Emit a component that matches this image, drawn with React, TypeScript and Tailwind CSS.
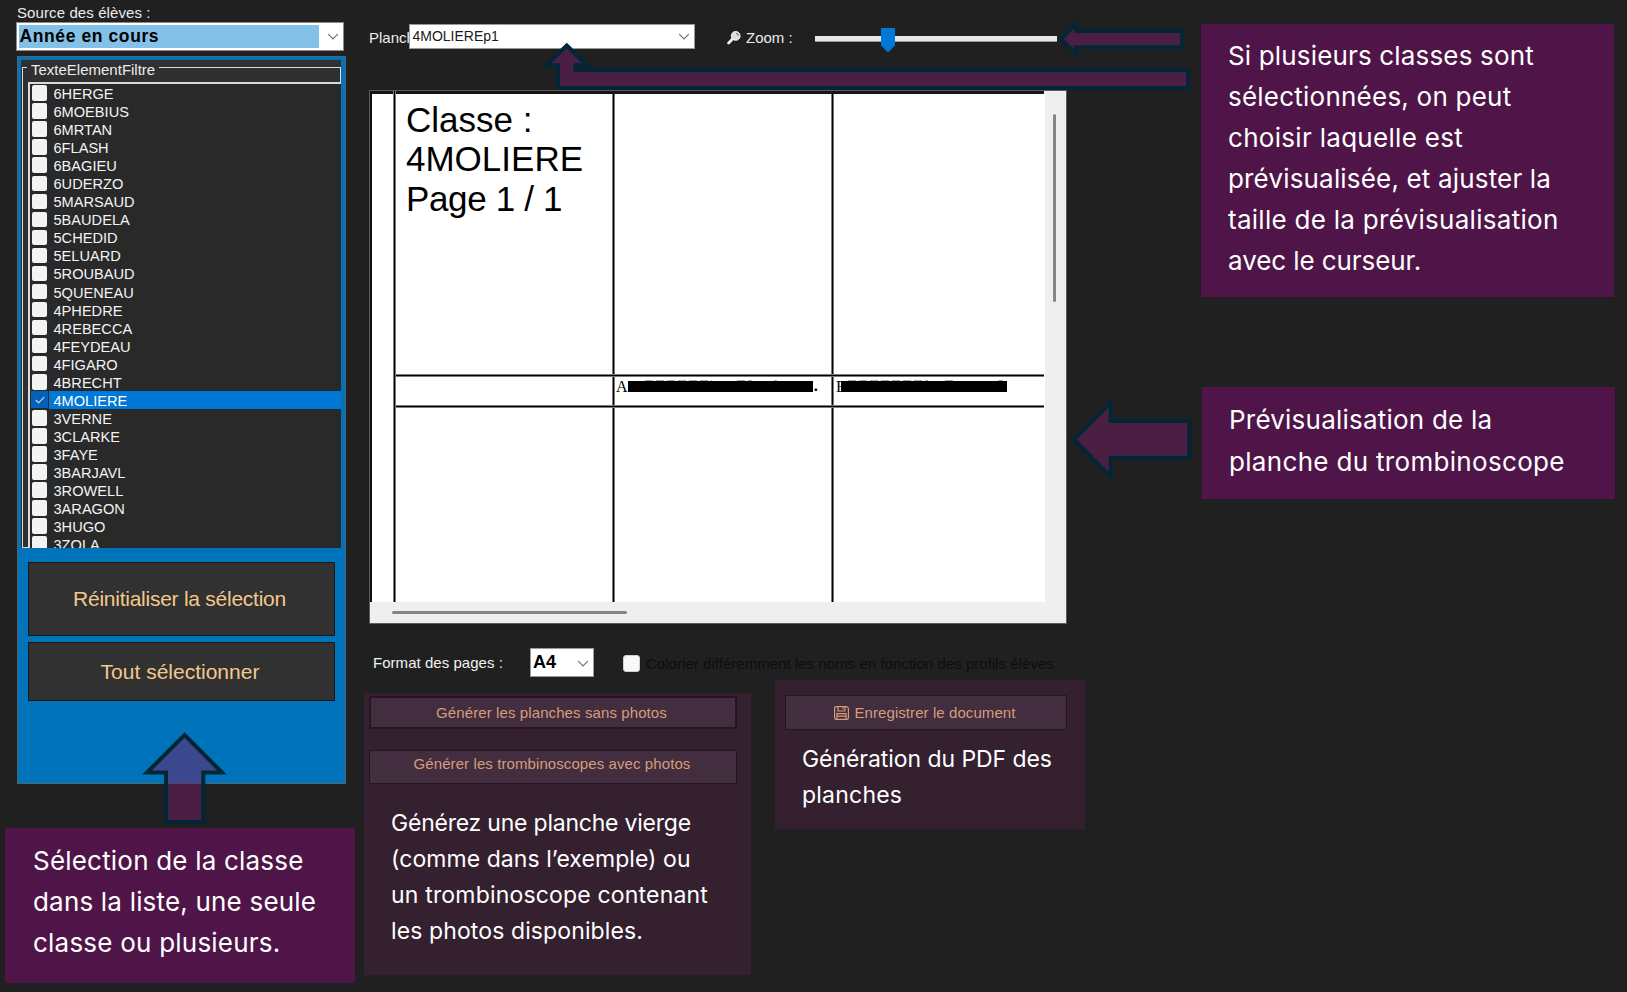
import type { ReactNode } from "react";

const classes = [
  "6HERGE", "6MOEBIUS", "6MRTAN", "6FLASH", "6BAGIEU", "6UDERZO", "5MARSAUD",
  "5BAUDELA", "5CHEDID", "5ELUARD", "5ROUBAUD", "5QUENEAU", "4PHEDRE",
  "4REBECCA", "4FEYDEAU", "4FIGARO", "4BRECHT", "4MOLIERE", "3VERNE",
  "3CLARKE", "3FAYE", "3BARJAVL", "3ROWELL", "3ARAGON", "3HUGO", "3ZOLA",
];

function Chevron({ className = "" }: { className?: string }) {
  return (
    <svg width="12" height="8" viewBox="0 0 12 8" fill="none" className={className}>
      <path d="M1.2 1.2 L6 6 L10.8 1.2" stroke="#707070" strokeWidth="1.2" />
    </svg>
  );
}

function ClassRow({ name, selected }: { name: string; selected: boolean }) {
  return (
    <li className="flex h-[18.06px] items-center pl-[1px]">
      {selected ? (
        <span className="flex h-[17px] w-[17px] shrink-0 items-center justify-center bg-[#0560b8]">
          <svg width="10" height="8" viewBox="0 0 10 8" fill="none">
            <path d="M0.8 4 L3.6 6.8 L9.2 1.2" stroke="#d9e8f6" strokeWidth="1.1" />
          </svg>
        </span>
      ) : (
        <span className="mr-px ml-[0.5px] h-[15.5px] w-[15.5px] shrink-0 rounded-[2px] bg-[#f3f3f3]" />
      )}
      <span
        className={
          selected
            ? "ml-px h-full flex-1 bg-[#0078d7] pl-[4.5px] text-[14.6px] leading-[20px] text-white"
            : "ml-px h-full flex-1 pl-[4.5px] text-[14.6px] leading-[20px] text-[#f4f4f4]"
        }
      >
        {name}
      </span>
    </li>
  );
}

function Sidebar() {
  return (
    <aside className="flex w-[360px] shrink-0 flex-col">
      <div className="ml-[17px] h-[22px] pt-[3px] text-[15px] leading-[20px] tracking-[0.1px] text-[#ececec]">Source des élèves :</div>
      <div className="ml-[16px] flex h-[29px] w-[328px] items-center border border-[#8a8a8a] bg-white pl-[2px]">
        <div className="h-[23px] w-[300px] bg-[#83c1e8] pl-[0.5px] text-[17.5px] leading-[23px] font-bold tracking-[0.6px] text-black">
          Année en cours
        </div>
        <Chevron className="ml-[8px]" />
      </div>
      <section className="mt-[5px] ml-[17px] h-[728px] w-[329px] border border-[#4f6473] bg-[#0173bb] pt-[3px] pl-[3px]">
        <div className="h-[488px] w-[320px] overflow-hidden bg-[#303030] pt-[7px]">
          <div className="relative ml-px h-[481px] border border-[#dcdcdc]">
            <span className="absolute -top-[8px] left-[4px] bg-[#303030] px-[4px] text-[15px] leading-[20px] text-[#ececec]">
              TexteElementFiltre
            </span>
            <ul className="mt-[14px] -mr-px ml-[5px] h-[466px] overflow-hidden border-t-2 border-l-2 border-[#dcdcdc] bg-[#292929]">
              {classes.map((name) => (
                <ClassRow key={name} name={name} selected={name === "4MOLIERE"} />
              ))}
            </ul>
          </div>
        </div>
        <button className="mt-[14px] ml-[7px] flex h-[74px] w-[307px] items-center justify-center border border-[#181818] bg-[#313131] pr-[4px] text-[21px] tracking-[-0.25px] text-[#f3c98b]">
          Réinitialiser la sélection
        </button>
        <button className="mt-[6px] ml-[7px] flex h-[59px] w-[307px] items-center justify-center border border-[#181818] bg-[#313131] pr-[3px] text-[21px] text-[#f3c98b]">
          Tout sélectionner
        </button>
      </section>
      <div className="mt-[44px] ml-[5px] h-[155px] w-[350px] bg-[#4f1548] pt-[12px] pl-[28px] font-[Inter,sans-serif] text-[26px] leading-[41px] whitespace-nowrap text-white">
        <p className="tracking-[0.2px]">Sélection de la classe</p>
        <p className="tracking-[0.19px]">dans la liste, une seule</p>
        <p className="tracking-[0.22px]">classe ou plusieurs.</p>
      </div>
    </aside>
  );
}

function VLine() {
  return <span className="w-[3px] shrink-0 self-stretch border-x border-[#7c7c7c] bg-black" />;
}

function HLine() {
  return <div className="h-[3px] shrink-0 border-y border-[#7c7c7c] bg-black" />;
}

function SheetRow({ className, cells }: { className: string; cells: ReactNode[] }) {
  return (
    <div className={className}>
      <div className="w-[216px] shrink-0">{cells[0]}</div>
      <VLine />
      <div className="w-[216px] shrink-0">{cells[1]}</div>
      <VLine />
      <div className="flex-1">{cells[2]}</div>
    </div>
  );
}

function Preview() {
  return (
    <div className="ml-[9px] flex h-[534px] w-[698px] flex-col border border-[#5c5c5c] bg-[#efefef]">
      <div className="flex h-[511px]">
        <div className="flex w-[675px] border-l-2 border-[#101010] bg-white pr-px">
          <div className="w-[21px] border-t-[3px] border-[#161417]" />
          <VLine />
          <div className="flex flex-1 flex-col border-t-[3px] border-[#161417]">
            <SheetRow
              className="flex h-[280px]"
              cells={[
                <div key="t" className="pt-[6px] pl-[10px] text-[35px] leading-[39px] whitespace-nowrap text-black">
                  <p>Classe :</p>
                  <p>4MOLIERE</p>
                  <p className="pt-px tracking-[-0.35px]">Page 1 / 1</p>
                </div>,
                null,
                null,
              ]}
            />
            <HLine />
            <SheetRow
              className="flex h-[28px]"
              cells={[
                null,
                <div key="a" className="flex pl-px font-['Liberation_Mono',monospace] text-[16px] leading-[20px] text-black">
                  <span className="w-[12px] font-['Liberation_Serif',serif]">A</span>
                  <span className="mt-[4px] h-[11px] w-[185px] bg-black" />
                  <span className="-ml-[2px] font-bold">.</span>
                </div>,
                <div key="b" className="flex pl-[2px] font-['Liberation_Serif',serif] text-[16px] leading-[20px] text-black">
                  <span className="w-[5px]">E</span>
                  <span className="mt-[4px] h-[11px] w-[166px] bg-black" />
                </div>,
              ]}
            />
            <HLine />
            <SheetRow className="flex flex-1" cells={[null, null, null]} />
          </div>
        </div>
        <div className="flex-1 pt-[23px] pl-[8px]">
          <div className="h-[188px] w-[3px] rounded-full bg-[#858585]" />
        </div>
      </div>
      <div className="pt-[9px] pl-[22px]">
        <div className="h-[3px] w-[235px] rounded-full bg-[#858585]" />
      </div>
    </div>
  );
}

function Toolbar() {
  return (
    <div className="flex h-[90px] pl-[9px] text-[15px] text-[#ececec]">
      <div className="mt-[28px] h-[20px] w-[40px] leading-[20px] whitespace-nowrap">Planch</div>
      <div className="z-10 mt-[24px] flex h-[25px] w-[286px] justify-between border border-[#9a9a9a] bg-white pr-[4px] pl-[2.5px]">
        <span className="text-[14px] leading-[22px] text-[#1a1a1a]">4MOLIEREp1</span>
        <Chevron className="mt-[8px]" />
      </div>
      <svg width="14" height="14" viewBox="0 0 14 14" className="mt-[31px] ml-[32px]">
        <path d="M1.6 12 L5.6 8" stroke="#f0f0f0" strokeWidth="2.8" strokeLinecap="round" />
        <circle cx="8.7" cy="4.9" r="4.4" fill="#dedede" stroke="#f4f4f4" strokeWidth="1" />
        <path d="M9 2.4 a2.6 2.6 0 0 1 2.4 2.6" stroke="#8a7f74" strokeWidth="1.2" fill="none" />
      </svg>
      <div className="mt-[28px] ml-[5px] w-[69px] leading-[20px]">Zoom :</div>
      <div className="relative mt-[36px] h-[6px] w-[242px] border-b border-[#9a9a9a] bg-[#e6e9e6]">
        <svg width="14" height="25" viewBox="0 0 14 25" className="absolute -top-[8px] left-[66px]">
          <path d="M0 0 H14 V17.5 L7 24.6 L0 17.5 Z" fill="#0078d7" />
        </svg>
      </div>
    </div>
  );
}

function SaveIcon() {
  return (
    <svg width="15" height="14" viewBox="0 0 15 14" fill="none" stroke="#d69c7c" strokeWidth="1.2">
      <path d="M2.2 0.6 H12.8 L14.4 2.2 V11.8 Q14.4 13.4 12.8 13.4 H2.2 Q0.6 13.4 0.6 11.8 V2.2 Q0.6 0.6 2.2 0.6 Z" />
      <path d="M4 0.8 V5 H11 V0.8 M9 1.5 V3.6" />
      <path d="M3 13 V7.6 H12 V13 M3 10.2 H12" />
    </svg>
  );
}

function Main() {
  return (
    <main className="flex w-[841px] shrink-0 flex-col">
      <Toolbar />
      <Preview />
      <div className="flex">
        <div className="w-[415px]">
          <div className="flex h-[69px] pl-[13px]">
            <span className="mt-[29px] w-[157px] text-[15px] leading-[20px] tracking-[0.04px] text-[#f2f2f2]">Format des pages :</span>
            <div className="mt-[24px] flex h-[29px] w-[64px] justify-between border border-[#9a9a9a] bg-white pr-[4px] pl-[2px]">
              <span className="text-[18px] leading-[26px] font-bold text-black">A4</span>
              <Chevron className="mt-[11px]" />
            </div>
            <span className="mt-[31px] ml-[29px] h-[17px] w-[17px] rounded-[3px] border border-[#d0d0d0] bg-[#f8f8f8]" />
            <span className="mt-[30px] ml-[6px] w-0 text-[15px] leading-[20px] tracking-[0.037px] whitespace-nowrap text-[#0e0e0e]">
              Colorier différemment les noms en fonction des profils élèves
            </span>
          </div>
          <section className="ml-[4px] h-[282px] w-[387px] bg-[#352030] pt-[3px] pl-[5px]">
            <button className="flex h-[33px] w-[368px] items-center justify-center border-2 border-[#271523] bg-[#422e3e] pt-px pr-[3px] text-[15px] tracking-[0.1px] text-[#d69c7c]">
              Générer les planches sans photos
            </button>
            <button className="mt-[21px] flex h-[34px] w-[368px] items-center justify-center border border-[#271523] bg-[#422e3e] pr-[2px] pb-[6px] text-[15px] tracking-[0.09px] text-[#d69c7c]">
              Générer les trombinoscopes avec photos
            </button>
            <div className="mt-[21px] ml-[22px] font-[Inter,sans-serif] text-[23px] leading-[36px] whitespace-nowrap text-white">
              <p className="tracking-[-0.22px]">Générez une planche vierge</p>
              <p className="tracking-[0.06px]">(comme dans l’exemple) ou</p>
              <p className="tracking-[0.18px]">un trombinoscope contenant</p>
              <p className="tracking-[0.11px]">les photos disponibles.</p>
            </div>
          </section>
        </div>
        <section className="mt-[56px] h-[149px] w-[310px] bg-[#352030] pt-[15px] pl-[10px]">
          <button className="flex h-[35px] w-[282px] items-center justify-center gap-[5px] border border-[#271523] bg-[#422e3e] pr-[2px] text-[15px] tracking-[0.08px] text-[#d69c7c]">
            <SaveIcon />
            <span className="pt-[2px]">Enregistrer le document</span>
          </button>
          <div className="mt-[11px] ml-[17px] font-[Inter,sans-serif] text-[23px] leading-[36px] whitespace-nowrap text-white">
            <p className="tracking-[-0.06px]">Génération du PDF des</p>
            <p className="tracking-[0.22px]">planches</p>
          </div>
        </section>
      </div>
    </main>
  );
}

function Notes() {
  return (
    <aside className="flex flex-1 flex-col font-[Inter,sans-serif] text-[26px] whitespace-nowrap text-white">
      <div className="mt-[24px] h-[273px] w-[413px] bg-[#4f1548] pt-[10.5px] pl-[27px] leading-[41px]">
        <p className="tracking-[0.16px]">Si plusieurs classes sont</p>
        <p className="tracking-[0.23px]">sélectionnées, on peut</p>
        <p className="tracking-[0.3px]">choisir laquelle est</p>
        <p className="tracking-[0.17px]">prévisualisée, et ajuster la</p>
        <p className="tracking-[0.28px]">taille de la prévisualisation</p>
        <p className="tracking-[-0.08px]">avec le curseur.</p>
      </div>
      <div className="mt-[90px] ml-px h-[112px] w-[413px] bg-[#4f1548] pt-[12px] pl-[27px] leading-[41.6px]">
        <p className="tracking-[0.22px]">Prévisualisation de la</p>
        <p className="tracking-[0.32px]">planche du trombinoscope</p>
      </div>
    </aside>
  );
}

function Arrows() {
  return (
    <svg
      width="1627"
      height="992"
      viewBox="0 0 1627 992"
      className="pointer-events-none absolute top-0 left-0 z-20"
      stroke="#032636"
      strokeWidth="4"
      strokeMiterlimit="10"
      fill="#4b1f43"
    >
      <path d="M184.5 735 L222 772.5 H203.3 V822 H166 V772.5 H147 Z" fill="#761e66" fillOpacity="0.5" />
      <path d="M566.7 45.5 L587 65.3 H575.3 V70 H1188 V88 H558 V65.3 H546.4 Z" />
      <path d="M1060.8 39 L1076 24 V31 H1182 V47.3 H1076 V54 Z" />
      <path d="M1073.8 439.5 L1110.7 402.3 V421 H1189.3 V458 H1110.7 V476.7 Z" />
      <path
        d="M645 380.5 H712 M737 380.5 H752 M774 380.5 H777 M848 380.5 H928 M945 380.5 H955 M998 380.5 H1003"
        stroke="#a8a8a8"
        strokeWidth="1"
        strokeDasharray="8 3"
      />
    </svg>
  );
}

export default function App() {
  return (
    <div className="relative flex h-[992px] w-[1627px] overflow-hidden bg-[#202020] font-['Liberation_Sans',Arial,sans-serif]">
      <Sidebar />
      <Main />
      <Notes />
      <Arrows />
    </div>
  );
}
